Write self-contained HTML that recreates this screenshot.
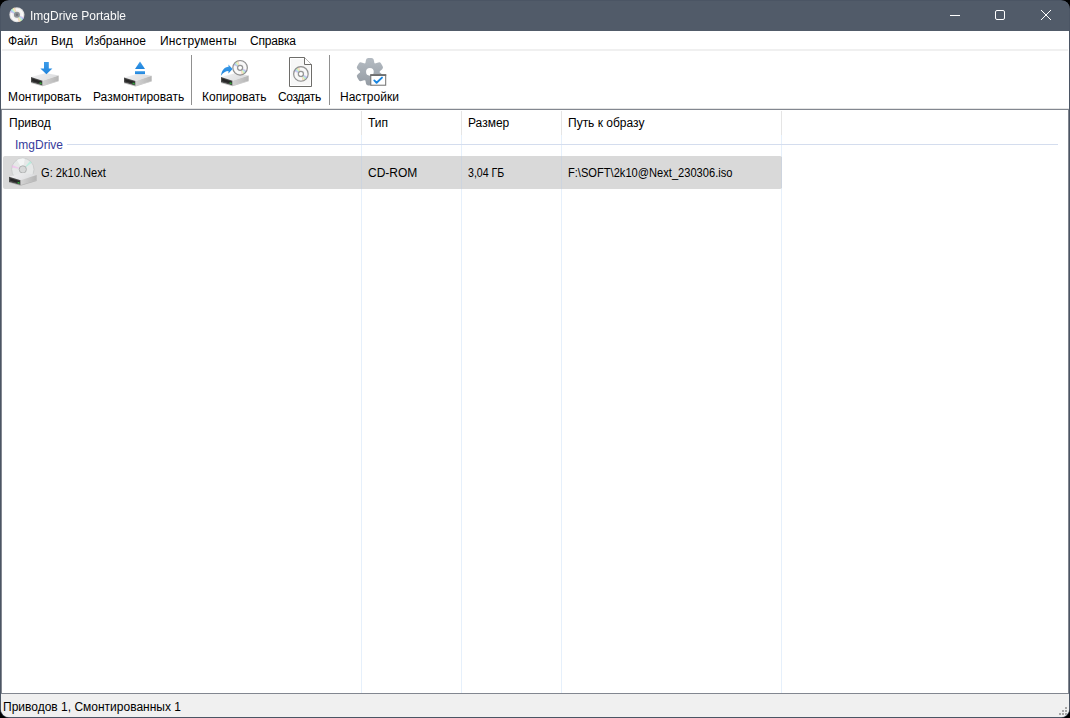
<!DOCTYPE html>
<html><head><meta charset="utf-8">
<style>
*{box-sizing:border-box;margin:0;padding:0}
html,body{width:1070px;height:718px;overflow:hidden;background:#000}
body{font-family:"Liberation Sans",sans-serif;font-size:12px;color:#000;position:relative}
.win{position:absolute;left:0;top:0;width:1070px;height:718px;border-radius:9px;background:#4b5564;overflow:hidden}
.title{position:absolute;left:1px;top:1px;width:1068px;height:30px;background:#515b69}
.t{position:absolute;white-space:nowrap;line-height:14px}
.client{position:absolute;left:1px;top:31px;width:1068px;height:686px;background:#fff;border-radius:0 0 8px 8px;overflow:hidden}
.menusep{position:absolute;left:1px;top:18px;width:1066px;height:2px;background:#f0f0f0}
.tbsep{position:absolute;width:1px;background:#909090}
.listbox{position:absolute;left:0;top:78px;width:1068px;height:585px;border:1px solid #828790;background:#fff}
.status{position:absolute;left:0;top:663px;width:1068px;height:23px;background:#f0f0f0}
.vline{position:absolute;width:1px}
</style></head><body>
<div class="win">
  <div class="title">
    
    <svg style="position:absolute;left:8px;top:6px;overflow:visible" width="16" height="16" viewBox="-8 -8 16 16">
      <defs>
        <radialGradient id="tcd" cx="0.5" cy="0.5" r="0.5">
          <stop offset="0.3" stop-color="#e8e8e8"/><stop offset="0.75" stop-color="#fafafa"/><stop offset="1" stop-color="#d0d0d0"/>
        </radialGradient>
      </defs>
      <circle cx="-0.1" cy="-0.25" r="7.6" fill="url(#tcd)"/>
      <g transform="translate(-0.1 -0.25)">
      <path d="M0 0 L-7.14 -2.60 A7.6 7.6 0 0 1 -6.65 -3.68 Z" fill="#d0b8e8" opacity="0.8"/>
<path d="M0 0 L7.14 2.60 A7.6 7.6 0 0 1 6.65 3.68 Z" fill="#d0b8e8" opacity="0.8"/>
<path d="M0 0 L-6.65 -3.68 A7.6 7.6 0 0 1 -5.91 -4.78 Z" fill="#90b0f0" opacity="0.8"/>
<path d="M0 0 L6.65 3.68 A7.6 7.6 0 0 1 5.91 4.78 Z" fill="#90b0f0" opacity="0.8"/>
<path d="M0 0 L-5.91 -4.78 A7.6 7.6 0 0 1 -5.09 -5.65 Z" fill="#a8e0e0" opacity="0.8"/>
<path d="M0 0 L5.91 4.78 A7.6 7.6 0 0 1 5.09 5.65 Z" fill="#a8e0e0" opacity="0.8"/>
<path d="M0 0 L-5.09 -5.65 A7.6 7.6 0 0 1 -4.14 -6.37 Z" fill="#b0f0a0" opacity="0.8"/>
<path d="M0 0 L5.09 5.65 A7.6 7.6 0 0 1 4.14 6.37 Z" fill="#b0f0a0" opacity="0.8"/>
<path d="M0 0 L-4.14 -6.37 A7.6 7.6 0 0 1 -3.09 -6.94 Z" fill="#f0e8a8" opacity="0.8"/>
<path d="M0 0 L4.14 6.37 A7.6 7.6 0 0 1 3.09 6.94 Z" fill="#f0e8a8" opacity="0.8"/>
<path d="M0 0 L-3.09 -6.94 A7.6 7.6 0 0 1 -1.84 -7.37 Z" fill="#f4c8a8" opacity="0.8"/>
<path d="M0 0 L3.09 6.94 A7.6 7.6 0 0 1 1.84 7.37 Z" fill="#f4c8a8" opacity="0.8"/>
      </g>
      <circle cx="-0.1" cy="-0.25" r="3.0" fill="#8e9398"/>
      <circle cx="-0.1" cy="-0.25" r="1.2" fill="#6c7178"/>
    </svg>
    <div class="t" style="left:29px;top:8px;color:#fafafa;will-change:transform">ImgDrive Portable</div>
    <div style="position:absolute;left:949px;top:14px;width:10px;height:1px;background:#fff"></div>
    <div style="position:absolute;left:994px;top:9px;width:10px;height:10px;border:1px solid #fff;border-radius:2px"></div>
    <svg style="position:absolute;left:1039px;top:8px" width="12" height="12" viewBox="0 0 12 12">
      <path d="M1 1 L11 11 M11 1 L1 11" stroke="#fff" stroke-width="1" fill="none"/>
    </svg>
  </div>
  <div class="client">
    <div class="t" style="left:7px;top:3px;">Файл</div><div class="t" style="left:50px;top:3px;">Вид</div><div class="t" style="left:84px;top:3px;">Избранное</div><div class="t" style="left:159px;top:3px;letter-spacing:0.18px">Инструменты</div><div class="t" style="left:249px;top:3px;letter-spacing:-0.2px">Справка</div>
    <div class="menusep"></div>
    <div class="t" style="left:7px;top:59px;">Монтировать</div><div class="t" style="left:92px;top:59px;">Размонтировать</div><div class="t" style="left:201px;top:59px;">Копировать</div><div class="t" style="left:277px;top:59px;letter-spacing:-0.4px">Создать</div><div class="t" style="left:339px;top:59px;">Настройки</div>
    <div class="tbsep" style="left:190px;top:24px;height:50px"></div>
    <div class="tbsep" style="left:328px;top:24px;height:50px"></div>
    <div style="position:absolute;left:0;top:77px;width:1068px;height:1px;background:#e4e4e4"></div>
    <div class="listbox">
      <div class="vline" style="left:359px;top:1px;height:24px;background:#e5e5e5"></div>
      <div class="vline" style="left:459px;top:1px;height:24px;background:#e5e5e5"></div>
      <div class="vline" style="left:559px;top:1px;height:24px;background:#e5e5e5"></div>
      <div class="vline" style="left:779px;top:1px;height:24px;background:#e5e5e5"></div>
      <div class="vline" style="left:359px;top:25px;height:558px;background:#e6f0fb"></div>
      <div class="vline" style="left:459px;top:25px;height:558px;background:#e6f0fb"></div>
      <div class="vline" style="left:559px;top:25px;height:558px;background:#e6f0fb"></div>
      <div class="vline" style="left:779px;top:25px;height:558px;background:#e6f0fb"></div>
<div class="t" style="left:7px;top:6px;">Привод</div><div class="t" style="left:366px;top:6px;">Тип</div><div class="t" style="left:466px;top:6px;">Размер</div><div class="t" style="left:566px;top:6px;">Путь к образу</div><div class="t" style="left:13px;top:28px;color:#363c9c">ImgDrive</div>
      <div style="position:absolute;left:65px;top:34px;width:991px;height:1px;background:#d4ddee"></div>
      <div style="position:absolute;left:1px;top:46px;width:779px;height:33px;background:#d9d9d9;border-radius:2px"></div>
      <div class="vline" style="left:359px;top:46px;height:33px;background:#cdd4de"></div>
      <div class="vline" style="left:459px;top:46px;height:33px;background:#cdd4de"></div>
      <div class="vline" style="left:559px;top:46px;height:33px;background:#cdd4de"></div>
      <div class="vline" style="left:779px;top:47px;height:31px;background:#cdd4de"></div>
<div class="t" style="left:39px;top:56px;transform:scaleX(0.926);transform-origin:0 0">G: 2k10.Next</div><div class="t" style="left:366px;top:56px;">CD-ROM</div><div class="t" style="left:466px;top:56px;transform:scaleX(0.885);transform-origin:0 0">3,04 ГБ</div><div class="t" style="left:566px;top:56px;transform:scaleX(0.926);transform-origin:0 0">F:\SOFT\2k10@Next_230306.iso</div>
    </div>
    <div class="status">
      <div class="t" style="left:2px;top:6px;">Приводов 1, Смонтированных 1</div>
      <div style="position:absolute;left:1064px;top:13px;width:2px;height:2px;background:#a6a6a6"></div><div style="position:absolute;left:1061px;top:16px;width:2px;height:2px;background:#a6a6a6"></div><div style="position:absolute;left:1064px;top:16px;width:2px;height:2px;background:#a6a6a6"></div><div style="position:absolute;left:1058px;top:19px;width:2px;height:2px;background:#a6a6a6"></div><div style="position:absolute;left:1061px;top:19px;width:2px;height:2px;background:#a6a6a6"></div><div style="position:absolute;left:1064px;top:19px;width:2px;height:2px;background:#a6a6a6"></div>
    </div>
  </div>
  
  <svg style="position:absolute;left:0;top:0" width="1070" height="200" viewBox="0 0 1070 200">
    <defs>
      <linearGradient id="dtop" x1="0" y1="0" x2="1" y2="0.3">
        <stop offset="0" stop-color="#f2f2f3"/><stop offset="1" stop-color="#dcdddf"/>
      </linearGradient>
      <linearGradient id="dright" x1="0" y1="0" x2="1" y2="0">
        <stop offset="0" stop-color="#d4d4d4"/><stop offset="1" stop-color="#b4b4b4"/>
      </linearGradient>
      <linearGradient id="blue" x1="0" y1="0" x2="0" y2="1">
        <stop offset="0" stop-color="#3d9ce9"/><stop offset="1" stop-color="#1f84dc"/>
      </linearGradient>
      <linearGradient id="gear" x1="0" y1="0" x2="0" y2="1">
        <stop offset="0" stop-color="#b2b9c0"/><stop offset="1" stop-color="#979ea6"/>
      </linearGradient>
      <radialGradient id="cdr" cx="0.5" cy="0.5" r="0.5">
        <stop offset="0.3" stop-color="#f0f0f0"/><stop offset="0.75" stop-color="#fbfbfb"/><stop offset="1" stop-color="#e0e0e0"/>
      </radialGradient>
      <g id="drive">
        <path d="M0 5.1 L14.8 1.1 L27.7 3.5 L11.6 8.7 Z" fill="url(#dtop)"/>
        <path d="M0 5.1 L11.6 8.7 L11.6 13.5 L0 10.3 Z" fill="#4a4a4a"/>
        <path d="M1.2 6.6 L10.6 9.5 L10.6 11.8 L1.2 9.2 Z" fill="#262626"/>
        <path d="M0 10.3 L11.6 13.5 L11.6 14.2 L0 11 Z" fill="#8c8c8c" opacity="0.6"/>
        <path d="M11.6 8.7 L27.7 3.5 L27.7 8.7 L11.6 13.5 Z" fill="url(#dright)"/>
        <path d="M11.6 13.5 L27.7 8.7 L27.7 9.3 L11.6 14.2 Z" fill="#9a9a9a" opacity="0.6"/>
        <path d="M8.6 10.2 L10.6 10.8 L10.6 12.2 L8.6 11.6 Z" fill="#2fb33a"/>
      </g>
      <g id="cd">
        <circle cx="0" cy="0" r="7.3" fill="url(#cdr)"/>
        <path d="M0 0 L-6.86 -2.50 A7.3 7.3 0 0 1 -6.38 -3.54 Z" fill="#d0b8e8" opacity="0.8"/>
<path d="M0 0 L6.86 2.50 A7.3 7.3 0 0 1 6.38 3.54 Z" fill="#d0b8e8" opacity="0.8"/>
<path d="M0 0 L-6.38 -3.54 A7.3 7.3 0 0 1 -5.67 -4.59 Z" fill="#90b0f0" opacity="0.8"/>
<path d="M0 0 L6.38 3.54 A7.3 7.3 0 0 1 5.67 4.59 Z" fill="#90b0f0" opacity="0.8"/>
<path d="M0 0 L-5.67 -4.59 A7.3 7.3 0 0 1 -4.88 -5.42 Z" fill="#a8e0e0" opacity="0.8"/>
<path d="M0 0 L5.67 4.59 A7.3 7.3 0 0 1 4.88 5.42 Z" fill="#a8e0e0" opacity="0.8"/>
<path d="M0 0 L-4.88 -5.42 A7.3 7.3 0 0 1 -3.98 -6.12 Z" fill="#b0f0a0" opacity="0.8"/>
<path d="M0 0 L4.88 5.42 A7.3 7.3 0 0 1 3.98 6.12 Z" fill="#b0f0a0" opacity="0.8"/>
<path d="M0 0 L-3.98 -6.12 A7.3 7.3 0 0 1 -2.97 -6.67 Z" fill="#f0e8a8" opacity="0.8"/>
<path d="M0 0 L3.98 6.12 A7.3 7.3 0 0 1 2.97 6.67 Z" fill="#f0e8a8" opacity="0.8"/>
<path d="M0 0 L-2.97 -6.67 A7.3 7.3 0 0 1 -1.77 -7.08 Z" fill="#f4c8a8" opacity="0.8"/>
<path d="M0 0 L2.97 6.67 A7.3 7.3 0 0 1 1.77 7.08 Z" fill="#f4c8a8" opacity="0.8"/>
        <circle cx="0" cy="0" r="7.3" fill="none" stroke="#909090" stroke-width="1.1"/>
        <circle cx="0" cy="0" r="2.5" fill="#fff" stroke="#969696" stroke-width="1.3"/>
      </g>
    </defs>
    <!-- Mount -->
    <use href="#drive" x="31" y="72"/>
    <path d="M44 62 H48.8 V68.5 H52.4 L46.4 74.2 L40.4 68.5 H44 Z" fill="url(#blue)"/>
    <!-- Unmount -->
    <use href="#drive" x="124" y="72.3"/>
    <path d="M140 61.5 L145 69 H135 Z" fill="url(#blue)"/>
    <rect x="135" y="71.2" width="10" height="2.9" fill="url(#blue)"/>
    <!-- Copy -->
    <use href="#drive" x="221" y="72"/>
    <use href="#cd" x="240.1" y="67.8"/>
    <path d="M221.1 75.8 C221.3 70.5 224.5 66.9 228.6 66.7 L228.4 64.6 L232.6 68.9 L228.4 73.4 L228.5 71.1 C225.6 71.1 223.2 72.6 221.1 75.8 Z" fill="url(#blue)"/>
    <!-- Create -->
    <path d="M289.5 57.5 H304.5 L311.5 64.5 V86.5 H289.5 Z" fill="#ffffff" stroke="#6e6d6a" stroke-width="1"/>
    <path d="M291 59 H304 V65 H310 V85 H291 Z" fill="#f7f7f7"/>
    <path d="M304.5 57.5 V64.5 H311.5" fill="#fff" stroke="#6e6d6a" stroke-width="1"/>
    <use href="#cd" x="300.9" y="73.9"/>
    <!-- Settings -->
    <g transform="translate(369.9 71.8)">
      <path fill="url(#gear)" stroke="url(#gear)" stroke-width="4.6" stroke-linejoin="round" fill-rule="evenodd" d="M-2.50 -7.18 L-1.60 -11.50 L1.60 -11.50 L2.50 -7.18 A7.6 7.6 0 0 1 4.97 -5.75 L9.16 -7.14 L10.76 -4.36 L7.47 -1.42 A7.6 7.6 0 0 1 7.47 1.42 L10.76 4.36 L9.16 7.14 L4.97 5.75 A7.6 7.6 0 0 1 2.50 7.18 L1.60 11.50 L-1.60 11.50 L-2.50 7.18 A7.6 7.6 0 0 1 -4.97 5.75 L-9.16 7.14 L-10.76 4.36 L-7.47 1.42 A7.6 7.6 0 0 1 -7.47 -1.42 L-10.76 -4.36 L-9.16 -7.14 L-4.97 -5.75 A7.6 7.6 0 0 1 -2.50 -7.18 Z M6.15 0 A6.15 6.15 0 1 0 -6.15 0 A6.15 6.15 0 1 0 6.15 0 Z"/>
    </g>
    <rect x="370.8" y="74.8" width="14.9" height="10.4" fill="#fff" stroke="#6e6e6e" stroke-width="1"/>
    <rect x="370.3" y="74.3" width="15.9" height="1.7" fill="#6e6e6e"/>
    <path d="M374.3 80.4 L376.6 82.8 L382 77.6" fill="none" stroke="#1a86e0" stroke-width="1.9" stroke-linecap="round" stroke-linejoin="round"/>
    <!-- Row icon -->
    <g transform="translate(22.8 169.4)">
      <circle r="11.2" fill="#e6e8e8" stroke="#c4c6c6" stroke-width="0.8"/>
      <path d="M0 0 L-11.1 -2.0 A11.2 11.2 0 0 1 -10.4 -4.3 Z" fill="#f4b0ec" opacity="0.55"/>
      <path d="M0 0 L9.0 -6.7 A11.2 11.2 0 0 1 7.3 -8.5 Z" fill="#a0f0d8" opacity="0.6"/>
      <path d="M0 0 L-6 -9.5 A11.2 11.2 0 0 1 2 -11 Z" fill="#f6f8f8" opacity="0.8"/>
      <circle r="3.6" fill="#d6d8d8" stroke="#b0b2b2" stroke-width="1"/>
    </g>
    <use href="#drive" x="9" y="171.6"/>
  </svg>

</div>
</body></html>
